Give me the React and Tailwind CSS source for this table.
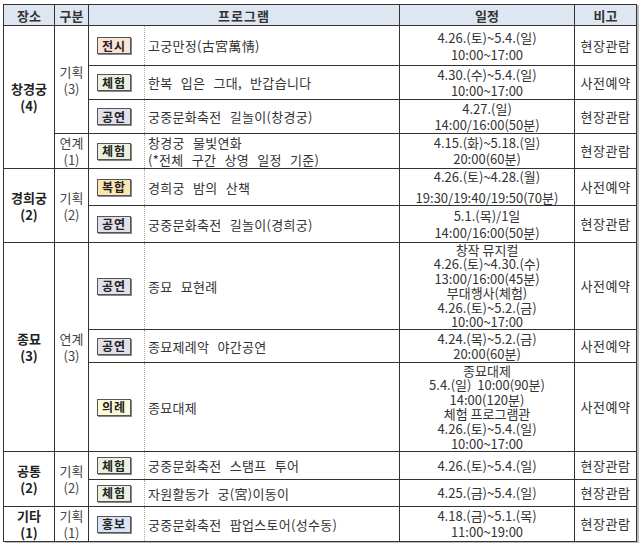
import React from "react";

const tagColors = {
  전시: "bg-[#fbe3d6]",
  체험: "bg-[#ebf1de]",
  공연: "bg-[#e4dfec]",
  복합: "bg-[#fce5b2]",
  의례: "bg-[#fefbd9]",
  홍보: "bg-[#dbe5f7]",
};

const rows = [
  {
    place: ["창경궁", "(4)"], placeSpan: 4, kind: ["기획", "(3)"], kindSpan: 3,
    tag: "전시", name: ["고궁만정(古宮萬情)"],
    sched: ["4.26.(토)~5.4.(일)", "10:00~17:00"], lead: "leading-[17px]", note: "현장관람", h: "h-[40px]",
  },
  {
    tag: "체험", name: ["한복 입은 그대, 반갑습니다"],
    sched: ["4.30.(수)~5.4.(일)", "10:00~17:00"], note: "사전예약", h: "h-[34px]",
  },
  {
    tag: "공연", name: ["궁중문화축전 길놀이(창경궁)"],
    sched: ["4.27.(일)", "14:00/16:00(50분)"], note: "현장관람", h: "h-[34px]",
  },
  {
    kind: ["연계", "(1)"], kindSpan: 1,
    tag: "체험", name: ["창경궁 물빛연화", "(*전체 구간 상영 일정 기준)"],
    sched: ["4.15.(화)~5.18.(일)", "20:00(60분)"], note: "현장관람", h: "h-[34px]",
  },
  {
    place: ["경희궁", "(2)"], placeSpan: 2, kind: ["기획", "(2)"], kindSpan: 2,
    tag: "복합", name: ["경희궁 밤의 산책"],
    sched: ["4.26.(토)~4.28.(월)", "19:30/19:40/19:50(70분)"], wide: true,
    note: "사전예약", h: "h-[36px]",
  },
  {
    tag: "공연", name: ["궁중문화축전 길놀이(경희궁)"],
    sched: ["5.1.(목)/1일", "14:00/16:00(50분)"], lead: "leading-[17px]", note: "현장관람", h: "h-[37px]",
  },
  {
    place: ["종묘", "(3)"], placeSpan: 3, kind: ["연계", "(3)"], kindSpan: 3,
    tag: "공연", name: ["종묘 묘현례"],
    sched: ["창작 뮤지컬", "4.26.(토)~4.30.(수)", "13:00/16:00(45분)", "부대행사(체험)", "4.26.(토)~5.2.(금)", "10:00~17:00"],
    lead: "leading-[14.4px]", note: "사전예약", h: "h-[87px]",
  },
  {
    tag: "공연", name: ["종묘제례악 야간공연"],
    sched: ["4.24.(목)~5.2.(금)", "20:00(60분)"], lead: "leading-[15px]", note: "사전예약", h: "h-[33px]",
  },
  {
    tag: "의례", name: ["종묘대제"],
    sched: ["종묘대제", "5.4.(일)\u00a0\u00a010:00(90분)", "14:00(120분)", "체험 프로그램관", "4.26.(토)~5.4.(일)", "10:00~17:00"],
    lead: "leading-[14.6px]", note: "사전예약", h: "h-[89px]",
  },
  {
    place: ["공통", "(2)"], placeSpan: 2, kind: ["기획", "(2)"], kindSpan: 2,
    tag: "체험", name: ["궁중문화축전 스탬프 투어"],
    sched: ["4.26.(토)~5.4.(일)"], note: "현장관람", h: "h-[28px]",
  },
  {
    tag: "체험", name: ["자원활동가 궁(宮)이동이"],
    sched: ["4.25.(금)~5.4.(일)"], note: "현장관람", h: "h-[27px]",
  },
  {
    place: ["기타", "(1)"], placeSpan: 1, kind: ["기획", "(1)"], kindSpan: 1,
    tag: "홍보", name: ["궁중문화축전 팝업스토어(성수동)"],
    sched: ["4.18.(금)~5.1.(목)", "11:00~19:00"], note: "현장관람", h: "h-[35px]",
  },
];

function Badge({ tag }) {
  return (
    <span
      className={`inline-flex items-center justify-center w-[34px] h-[17px] border border-[#555] shadow-[1px_1px_0_#8a8a8a] text-[12px] font-bold leading-none tracking-[1px] text-[#222] ${tagColors[tag]}`}
    >
      {tag}
    </span>
  );
}

export default function App() {
  return (
    <div className="w-[640px] h-[545px] bg-white pt-[4px] pl-[3px] font-['Noto_Sans_CJK_KR',sans-serif] text-[13px] text-[#333]">
      <table className="table-fixed border-collapse w-[633px] border border-[#333] shadow-[2px_1px_0_#bbb]">
        <colgroup>
          <col className="w-[51px]" />
          <col className="w-[34px]" />
          <col className="w-[56px]" />
          <col className="w-[255px]" />
          <col className="w-[175px]" />
          <col className="w-[62px]" />
        </colgroup>
        <thead>
          <tr className="h-[21px] bg-[#dde6f1] border-b border-[#333]">
            <th className="p-0 border-x border-[#333] font-bold leading-none">장소</th>
            <th className="p-0 border-x border-[#333] font-bold leading-none">구분</th>
            <th colSpan={2} className="p-0 border-x border-[#333] font-bold leading-none tracking-[1px]">프로그램</th>
            <th className="p-0 border-x border-[#333] font-bold leading-none">일정</th>
            <th className="p-0 border-x border-[#333] font-bold leading-none">비고</th>
          </tr>
        </thead>
        <tbody>
          {rows.map((r, i) => (
            <tr key={i} className={`${r.h} border-b border-[#333]`}>
              {r.place && (
                <td rowSpan={r.placeSpan} className="p-0 border-x border-[#333] text-center font-bold leading-[17px] text-[#222]">
                  {r.place.map((t) => (
                    <div key={t}>{t}</div>
                  ))}
                </td>
              )}
              {r.kind && (
                <td rowSpan={r.kindSpan} className="p-0 border-x border-[#333] text-center leading-[17px] text-[#444]">
                  {r.kind.map((t) => (
                    <div key={t}>{t}</div>
                  ))}
                </td>
              )}
              <td className="p-0 pl-[8px] border-l border-[#333] align-middle leading-none">
                <Badge tag={r.tag} />
              </td>
              <td className="p-0 pl-[3px] border-l border-dotted border-l-[#aaa] leading-[17px] whitespace-nowrap tracking-[0.3px] [word-spacing:5px]">
                {r.name.map((t) => (
                  <div key={t}>{t}</div>
                ))}
              </td>
              <td className={`p-0 border-x border-[#333] text-center whitespace-nowrap ${r.lead || "leading-[16px]"}`}>
                {r.wide ? (
                  <>
                    <div className="leading-[15px]">{r.sched[0]}</div>
                    <div className="leading-[15px] mt-[6px]">{r.sched[1]}</div>
                  </>
                ) : (
                  r.sched.map((t) => <div key={t}>{t}</div>)
                )}
              </td>
              <td className="p-0 border-x border-[#333] text-center tracking-[0.5px] leading-[16px]">{r.note}</td>
            </tr>
          ))}
        </tbody>
      </table>
    </div>
  );
}
